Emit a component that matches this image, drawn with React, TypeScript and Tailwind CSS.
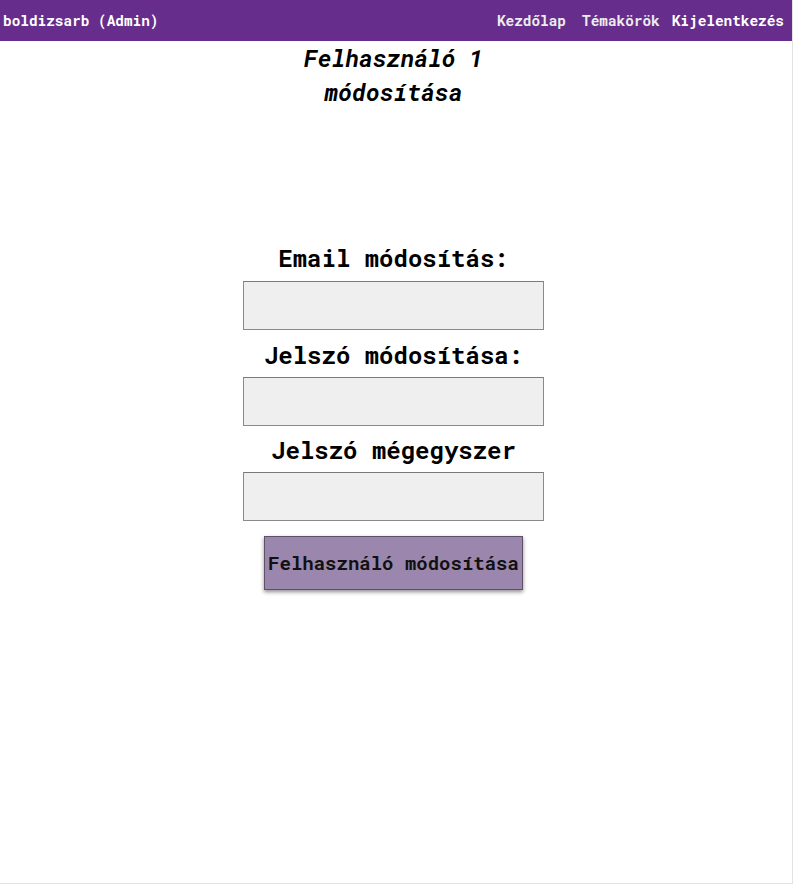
import { useState } from 'react';

const mono = "font-['Roboto_Mono','DejaVu_Sans_Mono','Liberation_Mono',monospace]";

function NavBar() {
  return (
    <header className="flex h-[41px] items-center justify-between bg-[#662d8c] pl-[3px] pr-[8px] text-[14.4px] font-bold text-white">
      <span>boldizsarb (Admin)</span>
      <nav className="flex items-center">
        <a className="mr-[16px] text-[#ececec]">Kezdőlap</a>
        <a className="mr-[12px] text-[#ececec]">Témakörök</a>
        <a>Kijelentkezés</a>
      </nav>
    </header>
  );
}

export default function App() {
  const [email, setEmail] = useState('');
  const [password, setPassword] = useState('');
  const [password2, setPassword2] = useState('');

  const inputClass =
    'h-[49px] w-[301px] border border-[#8a8a8a] border-t-[#7a7a7a] bg-[#efefef] px-2 text-[16px] outline-none';

  return (
    <div className={`${mono} h-[884px] w-full border-r border-b border-[#e3e3e3] bg-white text-black`}>
      <NavBar />

      <main className="flex w-[787px] flex-col items-center">
        {/* Title */}
        <h1 className="w-[250px] text-center text-[23.5px] font-bold italic leading-[34px]">
          Felhasználó 1 módosítása
        </h1>

        {/* Form */}
        <form className="mt-[133px] flex flex-col items-center" onSubmit={(e) => e.preventDefault()}>
          <label className="text-[24px] font-bold leading-[32px]">Email módosítás:</label>
          <input
            type="email"
            value={email}
            onChange={(e) => setEmail(e.target.value)}
            className={`${inputClass} mt-[7px]`}
          />

          <label className="mt-[9px] text-[24px] font-bold leading-[32px]">Jelszó módosítása:</label>
          <input
            type="password"
            value={password}
            onChange={(e) => setPassword(e.target.value)}
            className={`${inputClass} mt-[6px]`}
          />

          <label className="mt-[8px] text-[24px] font-bold leading-[32px]">Jelszó mégegyszer</label>
          <input
            type="password"
            value={password2}
            onChange={(e) => setPassword2(e.target.value)}
            className={`${inputClass} mt-[6px]`}
          />

          <button
            type="submit"
            className="mt-[15px] h-[54px] w-[259px] border border-[#5e5068] bg-[#9b86ad] text-[19px] font-bold text-[#111] shadow-[0_2px_4px_rgba(0,0,0,0.45)]"
          >
            Felhasználó módosítása
          </button>
        </form>
      </main>
    </div>
  );
}
